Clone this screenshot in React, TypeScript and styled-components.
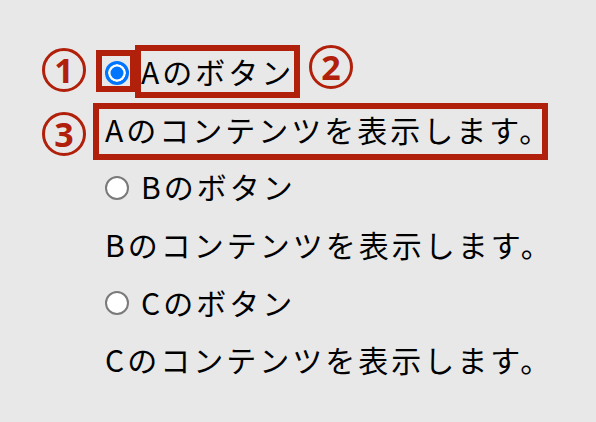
import React from "react";
import styled, { createGlobalStyle } from "styled-components";

const RED = "#b1200a";

const Global = createGlobalStyle`
  html, body { margin: 0; padding: 0; background: #e8e8e8; }
  body {
    font-family: "Noto Sans CJK JP", "Noto Sans", sans-serif;
    color: #000;
  }
`;

const Page = styled.div`
  display: grid;
  grid-template-columns: 99px 1fr;
  grid-auto-rows: 57.6px;
  padding-top: 45px;
  width: 596px;
  height: 422px;
  box-sizing: border-box;
`;

const Gutter = styled.div`
  display: flex;
  align-items: center;
  justify-content: flex-end;
  padding-right: 13px;
`;

const Marker = styled.span<{ $dy?: number; $gap?: number }>`
  display: inline-flex;
  align-items: center;
  justify-content: center;
  flex: none;
  box-sizing: border-box;
  width: 44px;
  height: 44px;
  border: 3px solid ${RED};
  border-radius: 50%;
  font-family: "Noto Sans", sans-serif;
  font-weight: 700;
  font-size: 34px;
  line-height: 1;
  letter-spacing: 0;
  color: ${RED};
  transform: translateY(${(p) => p.$dy ?? 0}px);
  margin-left: ${(p) => p.$gap ?? 0}px;
`;

const OptionRow = styled.label`
  display: flex;
  align-items: center;
  padding-left: 3px;
  font-size: 30px;
  letter-spacing: 3px;
`;

const RadioBox = styled.span<{ $marked: boolean }>`
  display: flex;
  box-sizing: border-box;
  width: 28px;
  height: 30px;
  padding: 5px 0 0 2.5px;
  margin-bottom: 5.6px;
  outline: 6px solid ${(p) => (p.$marked ? RED : "transparent")};
`;

const Radio = styled.input`
  appearance: none;
  margin: 0;
  box-sizing: border-box;
  width: 24px;
  height: 24px;
  border-radius: 50%;
  border: 2px solid #7a7a7a;
  background: #fff;

  &:checked {
    border: 3px solid #0075ff;
    background: #0075ff;
    box-shadow: inset 0 0 0 2.5px #fff;
  }
`;

const LabelBox = styled.span<{ $marked: boolean }>`
  display: block;
  width: 153px;
  height: 41px;
  line-height: 41px;
  margin-left: 11px;
  margin-bottom: 4px;
  white-space: nowrap;
  outline: 6px solid ${(p) => (p.$marked ? RED : "transparent")};
`;

const ContentRow = styled.div`
  display: flex;
  align-items: center;
  font-size: 30px;
  letter-spacing: 3px;
`;

const ContentBox = styled.span<{ $marked: boolean }>`
  display: block;
  box-sizing: border-box;
  width: 443px;
  height: 45px;
  line-height: 41px;
  padding: 0 0 4px 6px;
  white-space: nowrap;
  outline: 6px solid ${(p) => (p.$marked ? RED : "transparent")};
`;

const options = [
  { key: "A", checked: true, marked: true },
  { key: "B", checked: false, marked: false },
  { key: "C", checked: false, marked: false },
];

export default function App() {
  return (
    <>
      <Global />
      <Page>
        {options.map((o) => (
          <React.Fragment key={o.key}>
            <Gutter>{o.marked && <Marker $dy={-4}>1</Marker>}</Gutter>
            <OptionRow>
              <RadioBox $marked={o.marked}>
                <Radio type="radio" name="tab" defaultChecked={o.checked} />
              </RadioBox>
              <LabelBox $marked={o.marked}>{o.key}のボタン</LabelBox>
              {o.marked && (
                <Marker $dy={-7} $gap={15}>
                  2
                </Marker>
              )}
            </OptionRow>
            <Gutter>{o.marked && <Marker $dy={3}>3</Marker>}</Gutter>
            <ContentRow>
              <ContentBox $marked={o.marked}>{o.key}のコンテンツを表示します。</ContentBox>
            </ContentRow>
          </React.Fragment>
        ))}
      </Page>
    </>
  );
}
